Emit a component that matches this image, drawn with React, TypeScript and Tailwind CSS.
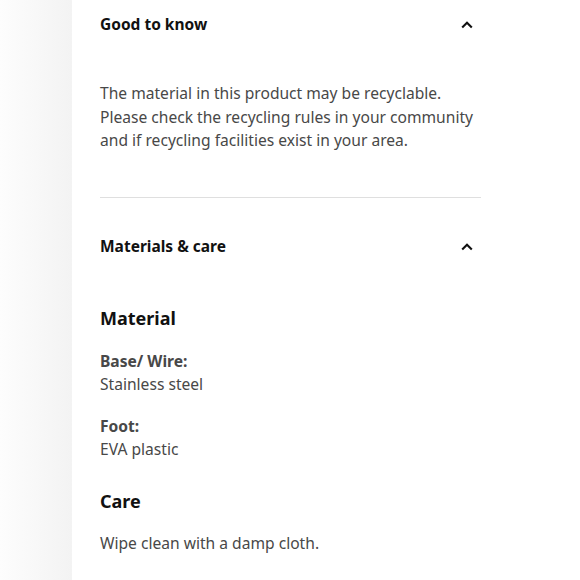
import React from "react";

function Chevron() {
  return (
    <svg width="14" height="14" viewBox="0 0 14 14" className="shrink-0">
      <path d="M2.2 9.6 L7 4.8 L11.8 9.6" fill="none" stroke="#111" strokeWidth="2.1" />
    </svg>
  );
}

export default function App() {
  return (
    <div
      className="flex w-[580px] h-[580px] overflow-hidden bg-white text-[#484848]"
      style={{ fontFamily: '"Noto Sans", "Open Sans", sans-serif' }}
    >
      <div className="w-[72px] shrink-0 bg-gradient-to-r from-[#fdfdfd] to-[#f3f3f3]" />
      <div className="flex-1 pl-[28px] pt-[1px]">
        <div className="w-[381px]">
          <div className="flex items-center justify-between h-[48px] pr-[7px]">
            <span className="text-[15.5px] font-bold text-[#111]">Good to know</span>
            <Chevron />
          </div>
          <p className="mt-[33px] text-[15.6px] leading-[23.5px] whitespace-nowrap">
            The material in this product may be recyclable.
            <br />
            Please check the recycling rules in your community
            <br />
            and if recycling facilities exist in your area.
          </p>
          <div className="mt-[44px] h-px bg-[#dfdfdf]" />
          <div className="flex items-center justify-between h-[48px] mt-[25px] pr-[7px]">
            <span className="text-[15.5px] font-bold text-[#111]">Materials &amp; care</span>
            <Chevron />
          </div>
          <h3 className="mt-[33px] text-[18px] leading-[28px] font-bold text-[#111]">Material</h3>
          <div className="mt-[18px] text-[15.6px] leading-[23.5px]">
            <div className="font-bold">Base/ Wire:</div>
            <div>Stainless steel</div>
          </div>
          <div className="mt-[18px] text-[15.6px] leading-[23.5px]">
            <div className="font-bold">Foot:</div>
            <div>EVA plastic</div>
          </div>
          <h3 className="mt-[25px] text-[18px] leading-[28px] font-bold text-[#111]">Care</h3>
          <p className="mt-[17px] text-[15.6px] leading-[23.5px]">Wipe clean with a damp cloth.</p>
        </div>
      </div>
    </div>
  );
}
